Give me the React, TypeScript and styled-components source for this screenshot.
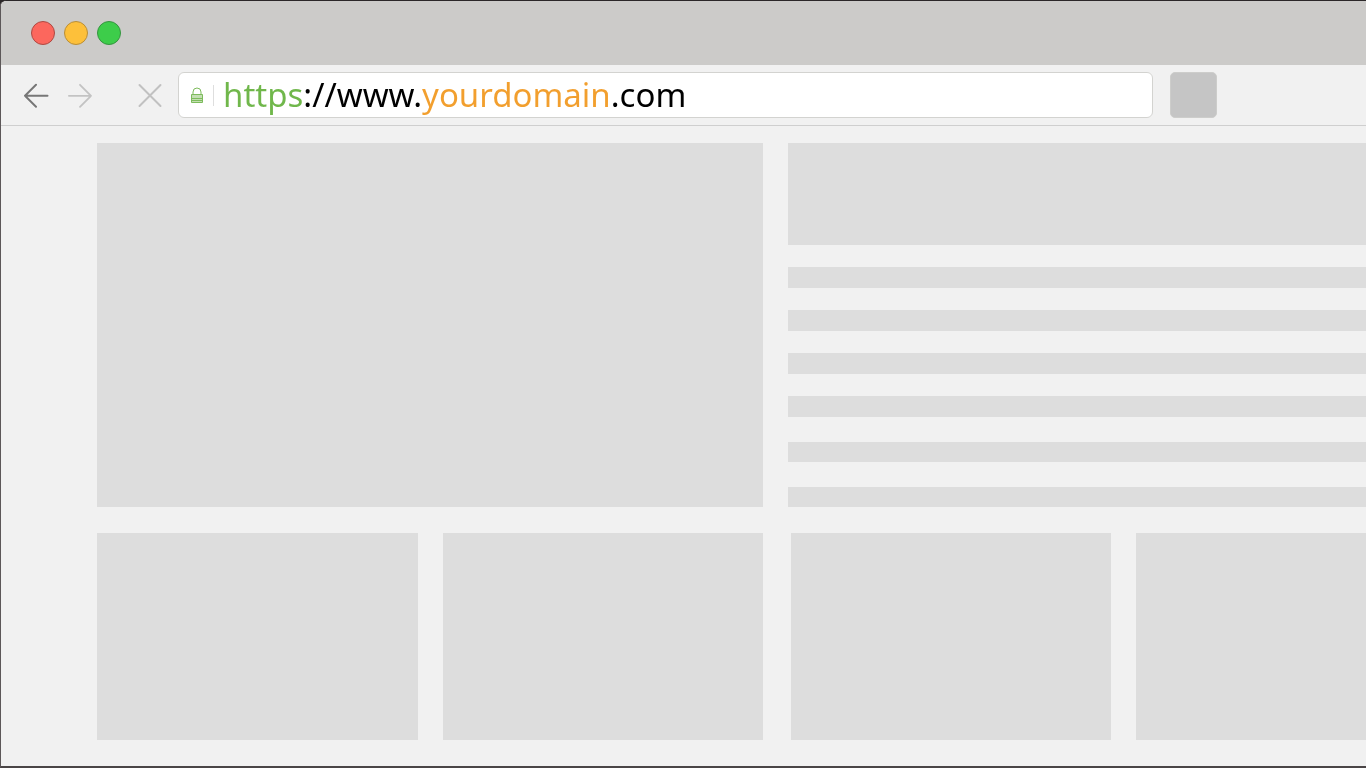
import React, { useState } from "react";
import styled, { createGlobalStyle } from "styled-components";

const GlobalStyle = createGlobalStyle`
  *, *::before, *::after { box-sizing: border-box; }
  body {
    margin: 0;
    background: #2b2728;
    font-family: "Noto Sans", "Open Sans", sans-serif;
  }
`;

const BrowserWindow = styled.div`
  display: flex;
  flex-direction: column;
  min-height: 100vh;
  overflow: hidden;
  border: solid #4a4546;
  border-width: 1px 0 2px 1px;
  border-top-color: #2b2728;
  border-left-color: #5c5758;
  border-top-left-radius: 6px;
  background: #f1f1f1;
`;

const TitleBar = styled.header`
  display: flex;
  align-items: center;
  gap: 9px;
  height: 64px;
  padding-left: 30px;
  background: #cccbc9;
`;

const WindowButton = styled.button<{ $fill: string; $edge: string }>`
  width: 24px;
  height: 24px;
  padding: 0;
  border: 1px solid ${(p) => p.$edge};
  border-radius: 50%;
  background: ${(p) => p.$fill};
`;

const Toolbar = styled.nav`
  display: flex;
  align-items: center;
  height: 61px;
  padding: 0 149px 0 22px;
  border-bottom: 1px solid #cfcfcf;
`;

const NavButtons = styled.div`
  display: flex;
  gap: 19px;
  margin-right: 43px;
`;

const IconButton = styled.button<{ $color: string }>`
  display: flex;
  padding: 0;
  border: 0;
  background: none;
  color: ${(p) => p.$color};
`;

const AddressBar = styled.label`
  display: flex;
  flex: 1;
  align-items: center;
  min-width: 0;
  height: 46px;
  margin: 0 17px 0 15px;
  padding-left: 12px;
  border: 1px solid #d3d3d0;
  border-radius: 6px;
  background: #fff;
`;

const Divider = styled.span`
  width: 1px;
  height: 21px;
  margin: 0 9px 0 10px;
  background: #dedede;
`;

/* The scheme and the domain are tinted by a gradient clipped to the text. */
const AddressInput = styled.input`
  flex: 1;
  min-width: 0;
  height: 44px;
  padding: 0;
  border: 0;
  outline: 0;
  font: 400 33px/44px "Noto Sans", "Open Sans", sans-serif;
  color: #000;
  background: linear-gradient(
    to right,
    #70b74b 80px,
    #000 80px 199px,
    #f29f2e 199px 389px,
    #000 389px
  );
  background-clip: text;
  -webkit-background-clip: text;
  -webkit-text-fill-color: transparent;
`;

const ToolButton = styled.button`
  width: 47px;
  height: 46px;
  padding: 0;
  border: 1px solid #cdcdcb;
  border-radius: 5px;
  background: #c5c5c5;
`;

const Page = styled.main`
  display: grid;
  grid-template-columns: 666fr 578fr;
  gap: 26px 25px;
  align-content: start;
  flex: 1;
  padding: 17px 0 26px 96px;
`;

const Block = styled.div<{ $height: number }>`
  height: ${(p) => p.$height}px;
  background: #dddddd;
`;

const Lines = styled.div<{ $gap: number }>`
  display: flex;
  flex-direction: column;
  gap: ${(p) => p.$gap}px;
`;

const CardRow = styled.div<{ $columns: string; $inset?: number }>`
  display: grid;
  grid-template-columns: ${(p) => p.$columns};
  gap: 25px;
  padding-left: ${(p) => p.$inset ?? 0}px;
`;

const BackIcon = () => (
  <svg width="26" height="26" viewBox="0 0 26 26" fill="none" stroke="currentColor" strokeWidth="2" strokeLinecap="round" strokeLinejoin="round" aria-hidden="true">
    <path d="M24.500 13.800H2M13 2.800l-11 11 11 11" />
  </svg>
);

const ForwardIcon = () => (
  <svg width="26" height="26" viewBox="0 0 26 26" fill="none" stroke="currentColor" strokeWidth="1.8" strokeLinecap="round" strokeLinejoin="round" aria-hidden="true">
    <path d="M.9 13.800H23M12 2.800l11 11-11 11" />
  </svg>
);

const StopIcon = () => (
  <svg width="26" height="26" viewBox="0 0 26 26" fill="none" stroke="currentColor" strokeWidth="2" strokeLinecap="round" aria-hidden="true">
    <path d="M2.500 3l21 21M23.500 3l-21 21" />
  </svg>
);

const LockIcon = () => (
  <svg width="12" height="18" viewBox="0 0 12 18" fill="none" stroke="#7dbb5c" aria-hidden="true">
    <path d="M2 8V6a4 4 0 0 1 8 0v2" />
    <path d="M.5 8.500h11v8H.5z" fill="#c3dfb2" />
    <path d="M.5 12.500h11M.5 14.500h11" />
  </svg>
);

export default function App() {
  const [address, setAddress] = useState("https://www.yourdomain.com");

  return (
    <>
      <GlobalStyle />
      <BrowserWindow>
        <TitleBar>
          <WindowButton type="button" aria-label="Close" $fill="#fc675d" $edge="#ad4a43" />
          <WindowButton type="button" aria-label="Minimize" $fill="#fdc03a" $edge="#b98e38" />
          <WindowButton type="button" aria-label="Maximize" $fill="#3dcd4a" $edge="#369440" />
        </TitleBar>
        <Toolbar aria-label="Browser toolbar">
          <NavButtons>
            <IconButton type="button" aria-label="Back" $color="#777777"><BackIcon /></IconButton>
            <IconButton type="button" aria-label="Forward" $color="#c3c3c3"><ForwardIcon /></IconButton>
          </NavButtons>
          <IconButton type="button" aria-label="Stop loading" $color="#c1c1c1"><StopIcon /></IconButton>
          <AddressBar>
            <LockIcon />
            <Divider />
            <AddressInput
              type="text"
              aria-label="Address"
              spellCheck={false}
              value={address}
              onChange={(e) => setAddress(e.target.value)}
            />
          </AddressBar>
          <ToolButton type="button" aria-label="Menu" />
        </Toolbar>
        <Page>
          <Block $height={364} />
          <Lines $gap={25}>
            <Lines $gap={22}>
              <Block $height={102} />
              <Block $height={21} />
              <Block $height={21} />
              <Block $height={21} />
              <Block $height={21} />
            </Lines>
            <Block $height={20} />
            <Block $height={20} />
          </Lines>
          <CardRow $columns="1fr 1fr">
            <Block $height={207} />
            <Block $height={207} />
          </CardRow>
          <CardRow $columns="320fr 230fr" $inset={3}>
            <Block $height={207} />
            <Block $height={207} />
          </CardRow>
        </Page>
      </BrowserWindow>
    </>
  );
}
